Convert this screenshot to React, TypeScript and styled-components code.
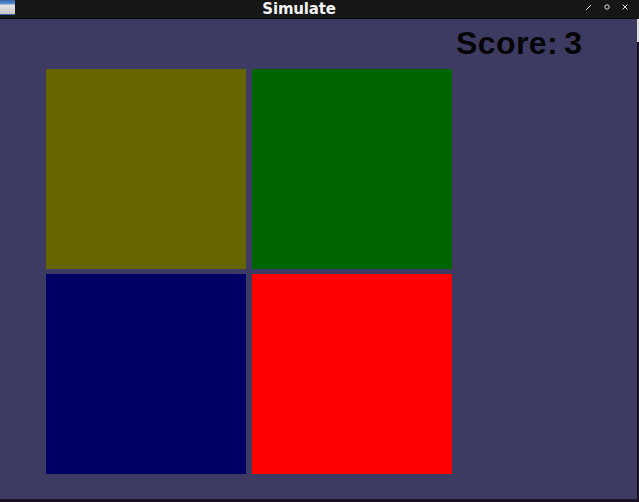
import React from 'react';
import styled, { createGlobalStyle } from 'styled-components';

const GlobalStyle = createGlobalStyle`
  html, body {
    margin: 0;
    padding: 0;
    width: 639px;
    height: 502px;
    overflow: hidden;
    background: #1a0f24;
  }
`;

const Window = styled.div`
  width: 639px;
  display: flex;
  flex-direction: column;
`;

const TitleBar = styled.div`
  height: 17px;
  flex: none;
  position: relative;
  display: flex;
  align-items: center;
  justify-content: center;
  padding: 0 41px 1px 0;
  background: #161616;
  border-bottom: 1px solid #0c0c0c;
`;

const AppIcon = styled.div`
  position: absolute;
  left: 0;
  top: 0;
  width: 15px;
  height: 15px;
  box-sizing: border-box;
  border-bottom: 1px solid #2f66ad;
  background: linear-gradient(#2f66ad 0, #5f93d0 4px, #e4e4e4 5px, #c4c4c4 14px);
`;

const Title = styled.span`
  color: #f2f2f2;
  font: bold 15px/16px "DejaVu Sans", sans-serif;
  letter-spacing: -0.2px;
`;

const Controls = styled.div`
  position: absolute;
  right: 10px;
  top: 3px;
  display: flex;
  gap: 10px;
`;

const ControlIcon = styled.svg`
  width: 8px;
  height: 8px;
  fill: none;
  stroke: #dddddd;
  stroke-width: 1;
`;

const Body = styled.div`
  display: flex;
  height: 480px;
`;

const Content = styled.div`
  width: 637px;
  flex: none;
  display: flex;
  flex-direction: column;
  padding-left: 46px;
  box-sizing: border-box;
  background: #3e3b63;
`;

const ScrollThumb = styled.div`
  width: 2px;
  height: 23px;
  background: #dcdcdc;
`;

const ScoreRow = styled.div`
  height: 50px;
  flex: none;
  padding-left: 410px;
`;

const Score = styled.span`
  display: block;
  color: #050508;
  font: bold 32px/48px "Liberation Sans", Arial, sans-serif;
  letter-spacing: 0.4px;
  word-spacing: -3px;
`;

const Board = styled.div`
  display: grid;
  grid-template-columns: 200px 200px;
  grid-auto-rows: 200px;
  column-gap: 6px;
  row-gap: 5px;
`;

const Tile = styled.div<{ $color: string }>`
  background: ${(p) => p.$color};
`;

const tiles = ['#666600', '#006400', '#000064', '#ff0000'];

const App: React.FC = () => {
  return (
    <Window>
      <GlobalStyle />
      <TitleBar>
        <AppIcon />
        <Title>Simulate</Title>
        <Controls>
          <ControlIcon viewBox="0 0 8 8">
            <path d="M1 7 L6 2" />
          </ControlIcon>
          <ControlIcon viewBox="0 0 8 8">
            <circle cx="4" cy="4" r="2.2" />
          </ControlIcon>
          <ControlIcon viewBox="0 0 8 8">
            <path d="M1.5 1.5 L6.5 6.5 M6.5 1.5 L1.5 6.5" />
          </ControlIcon>
        </Controls>
      </TitleBar>
      <Body>
        <Content>
          <ScoreRow>
            <Score>Score: 3</Score>
          </ScoreRow>
          <Board>
            {tiles.map((color) => (
              <Tile key={color} $color={color} />
            ))}
          </Board>
        </Content>
        <ScrollThumb />
      </Body>
    </Window>
  );
};

export default App;
